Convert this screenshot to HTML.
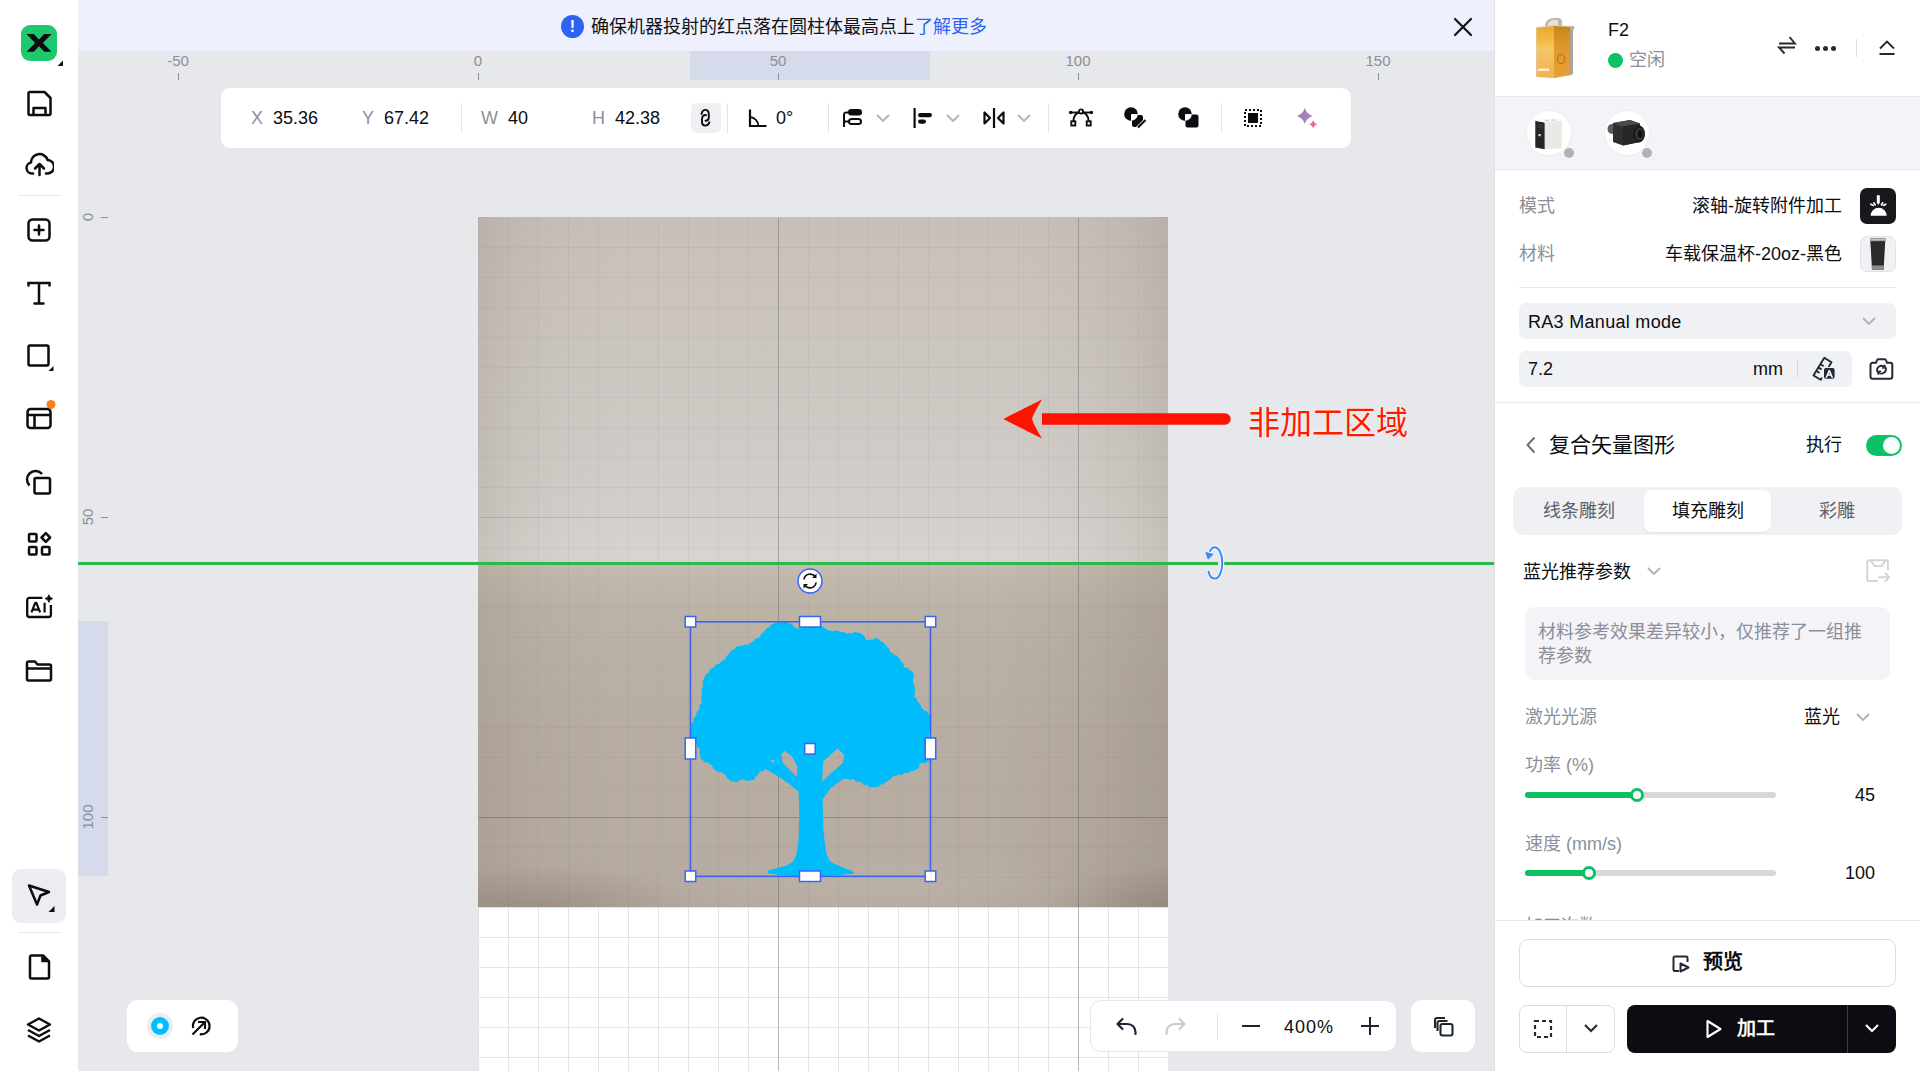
<!DOCTYPE html>
<html lang="zh-CN">
<head>
<meta charset="utf-8">
<style>
*{box-sizing:border-box;margin:0;padding:0}
html,body{width:1920px;height:1071px;overflow:hidden}
body{position:relative;background:#e7e8ec;font-family:"Liberation Sans",sans-serif;color:#111}
.a{position:absolute}
svg{display:block}
.t{white-space:nowrap;line-height:1}
</style>
</head>
<body>

<!-- CANVAS AREA -->

<div id="canvas" class="a" style="left:78px;top:0;width:1417px;height:1071px;background:#e7e8ec;overflow:hidden"></div>
<!-- workspace white grid -->
<div class="a" style="left:478px;top:217px;width:690px;height:854px;background-color:#fff;
background-image:linear-gradient(to right,#e3e3e6 1px,transparent 1px),linear-gradient(to bottom,#e3e3e6 1px,transparent 1px);
background-size:30px 30px;background-position:0 0"></div>
<!-- photo -->
<div class="a" style="left:478px;top:217px;width:690px;height:346px;
background:linear-gradient(to right,rgba(100,85,75,.14) 0%,rgba(100,85,75,.07) 5%,rgba(100,85,75,.025) 12%,rgba(100,85,75,0) 22%,rgba(100,85,75,0) 78%,rgba(100,85,75,.03) 88%,rgba(100,85,75,.08) 95%,rgba(100,85,75,.15) 100%),linear-gradient(to bottom,#c7bfba 0%,#ccc6c1 40%,#d2cdc8 80%,#d8d4cf 100%)"></div>
<div class="a" style="left:478px;top:563px;width:690px;height:344px;
background:radial-gradient(ellipse 160px 40px at 60px 344px,rgba(60,45,35,.16),rgba(60,45,35,0)),radial-gradient(ellipse 120px 40px at 690px 344px,rgba(60,45,35,.14),rgba(60,45,35,0)),radial-gradient(ellipse 260px 40px at 400px 325px,rgba(255,250,240,.10),rgba(255,250,240,0)),linear-gradient(to right,rgba(80,65,52,.10) 0%,rgba(80,65,52,.04) 8%,rgba(80,65,52,0) 20%,rgba(80,65,52,0) 75%,rgba(80,65,52,.05) 88%,rgba(80,65,52,.14) 100%),linear-gradient(to bottom,#c4bcb0 0%,#bcb3a7 12%,#b7ada2 50%,#b6aca1 85%,#b2a79c 100%)"></div>
<!-- grid over photo -->
<div class="a" style="left:479px;top:218px;width:689px;height:689px;
background-image:linear-gradient(to right,rgba(70,75,95,.06) 1px,transparent 1px),linear-gradient(to bottom,rgba(70,75,95,.06) 1px,transparent 1px);
background-size:30px 30px;background-position:29px 29px"></div>
<!-- major grid -->
<div class="a" style="left:778px;top:218px;width:1px;height:853px;background:rgba(70,70,70,.28)"></div>
<div class="a" style="left:1078px;top:218px;width:1px;height:853px;background:rgba(70,70,70,.28)"></div>
<div class="a" style="left:478px;top:517px;width:690px;height:1px;background:rgba(90,95,110,.16)"></div>
<div class="a" style="left:478px;top:817px;width:690px;height:1px;background:rgba(70,70,70,.28)"></div>


<!-- green line -->
<div class="a" style="left:78px;top:562px;width:1417px;height:3px;background:#2fb84a"></div>
<!-- tree + selection -->
<svg class="a" style="left:680px;top:611px" width="262" height="277" viewBox="-10 -10 262 277">
<g fill="#00bcfb" stroke="#00bcfb" stroke-width="2.5" stroke-linejoin="round" fill-rule="evenodd"><path d="M1.3,113.7 L3.9,102 L9.8,90 L13,82 L13,73 L15,57.5 L23.5,48 L35,40.5 L40.5,32.7 L49.7,26 L58.8,26 L62.7,22 L70.6,17 L75.8,10.5 L85,3.3 L96.7,2.6 L107,10.5 L118,6 L132,6.5 L136,11 L150,11.8 L157,14.4 L170,13 L178,23.5 L185.6,18.3 L194.8,24.8 L200,32.7 L209,39 L214,48 L222,52 L221,63 L224,68 L222,76 L228.8,83.7 L230,89 L239,95.4 L238,112 L236,125.5 L239,138.5 L227.5,140 L228,146 L215.7,150 L204,153 L196,159.4 L185.6,164.7 L173.9,160.8 L164.7,156.8 L154.2,155.5 L140,166 L131.4,177.7 L132,206.5 L133.5,222 L134.6,230 L136.5,236 L138.6,240.5 L142.5,243.5 L147.7,245.7 L156,249 L162.7,251.6 L150,252.8 L140,253.5 L100,253.5 L88,252.5 L78.4,251 L85,249 L96.7,245.7 L101,243.5 L104.6,240.5 L107,235.5 L108.3,230 L109.8,219.6 L110.5,193.4 L109.8,170 L100,162 L88.9,154.2 L73.9,145.7 L65.4,150.3 L58.2,158.8 L52.3,155.5 L41.8,159.4 L36,153 L35.3,150.3 L24.8,147.7 L23.5,142.5 L11.8,137.2 L11.1,127.4 L6.5,121.5ZM130.7,163.4 L132,139.8 L147.7,125.5 L155.6,133.3 L154,142.5ZM108.5,159.4 L108.5,145 L103,134.6 L94,128 L90,133.3 L91.5,142.5ZM77,139 L84.3,136.6 L86.3,145Z"/><g stroke="none"><circle cx="4.2" cy="110.4" r="4.2"/><circle cx="5.5" cy="104.6" r="4.2"/><circle cx="7.7" cy="98.8" r="4.2"/><circle cx="10.6" cy="92.9" r="4.2"/><circle cx="13.7" cy="86.1" r="4.2"/><circle cx="15.3" cy="77.8" r="4.2"/><circle cx="15.8" cy="69.6" r="4.2"/><circle cx="16.7" cy="62.0" r="4.2"/><circle cx="19.3" cy="55.9" r="4.2"/><circle cx="23.5" cy="51.2" r="4.2"/><circle cx="28.5" cy="47.1" r="4.2"/><circle cx="34.2" cy="43.5" r="4.2"/><circle cx="39.7" cy="37.9" r="4.2"/><circle cx="44.6" cy="32.4" r="4.2"/><circle cx="49.2" cy="29.2" r="4.2"/><circle cx="55.9" cy="27.6" r="4.2"/><circle cx="62.3" cy="25.7" r="4.2"/><circle cx="68.0" cy="21.3" r="4.2"/><circle cx="74.4" cy="15.7" r="4.2"/><circle cx="79.2" cy="10.8" r="4.2"/><circle cx="83.6" cy="7.2" r="4.2"/><circle cx="88.7" cy="5.3" r="4.2"/><circle cx="94.4" cy="5.0" r="4.2"/><circle cx="99.8" cy="6.8" r="4.2"/><circle cx="104.9" cy="10.8" r="4.2"/><circle cx="110.0" cy="11.7" r="4.2"/><circle cx="115.4" cy="9.4" r="4.2"/><circle cx="121.5" cy="8.4" r="4.2"/><circle cx="128.3" cy="8.7" r="4.2"/><circle cx="133.6" cy="11.0" r="4.2"/><circle cx="138.9" cy="13.4" r="4.2"/><circle cx="145.8" cy="13.8" r="4.2"/><circle cx="152.6" cy="15.2" r="4.2"/><circle cx="159.2" cy="16.1" r="4.2"/><circle cx="165.5" cy="15.3" r="4.2"/><circle cx="170.7" cy="17.5" r="4.2"/><circle cx="174.5" cy="22.7" r="4.2"/><circle cx="180.3" cy="22.6" r="4.2"/><circle cx="186.3" cy="21.6" r="4.2"/><circle cx="190.8" cy="24.7" r="4.2"/><circle cx="195.6" cy="30.2" r="4.2"/><circle cx="200.3" cy="35.6" r="4.2"/><circle cx="204.8" cy="38.6" r="4.2"/><circle cx="209.4" cy="44.5" r="4.2"/><circle cx="215.9" cy="50.9" r="4.2"/><circle cx="219.6" cy="55.5" r="4.2"/><circle cx="219.0" cy="60.9" r="4.2"/><circle cx="220.3" cy="66.0" r="4.2"/><circle cx="220.7" cy="72.4" r="4.2"/><circle cx="223.1" cy="80.1" r="4.2"/><circle cx="227.1" cy="86.4" r="4.2"/><circle cx="229.9" cy="90.6" r="4.2"/><circle cx="234.4" cy="93.7" r="4.2"/><circle cx="236.4" cy="99.4" r="4.2"/><circle cx="236.0" cy="107.5" r="4.2"/><circle cx="235.2" cy="114.9" r="4.2"/><circle cx="234.3" cy="121.5" r="4.2"/><circle cx="234.6" cy="128.0" r="4.2"/><circle cx="236.1" cy="134.4" r="4.2"/><circle cx="234.0" cy="138.0" r="4.2"/><circle cx="228.3" cy="138.7" r="4.2"/><circle cx="225.7" cy="142.0" r="4.2"/><circle cx="222.9" cy="145.9" r="4.2"/><circle cx="216.8" cy="147.8" r="4.2"/><circle cx="210.8" cy="149.5" r="4.2"/><circle cx="205.0" cy="150.9" r="4.2"/><circle cx="198.2" cy="154.7" r="4.2"/><circle cx="191.7" cy="159.1" r="4.2"/><circle cx="186.6" cy="161.7" r="4.2"/><circle cx="181.2" cy="162.0" r="4.2"/><circle cx="175.4" cy="160.0" r="4.2"/><circle cx="168.0" cy="156.9" r="4.2"/><circle cx="160.8" cy="154.5" r="4.2"/><circle cx="155.7" cy="153.8" r="4.2"/><circle cx="71.2" cy="146.3" r="4.2"/><circle cx="65.1" cy="150.7" r="4.2"/><circle cx="61.5" cy="155.0" r="4.2"/><circle cx="56.9" cy="155.5" r="4.2"/><circle cx="51.4" cy="154.9" r="4.2"/><circle cx="46.1" cy="156.9" r="4.2"/><circle cx="40.7" cy="154.7" r="4.2"/><circle cx="37.5" cy="150.3" r="4.2"/><circle cx="34.6" cy="148.3" r="4.2"/><circle cx="29.4" cy="147.1" r="4.2"/><circle cx="26.2" cy="143.9" r="4.2"/><circle cx="22.6" cy="140.1" r="4.2"/><circle cx="16.8" cy="137.6" r="4.2"/><circle cx="13.6" cy="131.5" r="4.2"/><circle cx="11.0" cy="123.8" r="4.2"/><circle cx="6.1" cy="117.1" r="4.2"/></g></g>
<rect x="0.5" y="0.8" width="240" height="254.5" fill="none" stroke="#3a64f2" stroke-width="1.6"/>
<g fill="#fff" stroke="#3a64f2" stroke-width="1.5">
<rect x="-4.8" y="-4.5" width="10.5" height="10.5"/>
<rect x="235.2" y="-4.5" width="10.5" height="10.5"/>
<rect x="-4.8" y="250" width="10.5" height="10.5"/>
<rect x="235.2" y="250" width="10.5" height="10.5"/>
<rect x="109.5" y="-4.5" width="21" height="10.5"/>
<rect x="109.5" y="250" width="21" height="10.5"/>
<rect x="-4.8" y="117" width="10.5" height="21"/>
<rect x="235.2" y="117" width="10.5" height="21"/>
<rect x="114.7" y="122.5" width="10.5" height="10.5"/>
</g></svg>
<!-- rotate handle -->
<svg class="a" style="left:796px;top:567px" width="28" height="28" viewBox="0 0 28 28"><circle cx="14" cy="14" r="12" fill="#fff" stroke="#3a64f2" stroke-width="1.5"/><g fill="none" stroke="#111" stroke-width="1.7"><path d="M8 12.5a6.2 6.2 0 0 1 11.2-2.8M20 15.5a6.2 6.2 0 0 1-11.2 2.8"/></g><path d="M20.5 6.5v4.5h-4.5z M7.5 21.5V17H12z" fill="#111"/></svg>
<!-- blue rotate icon on green line -->
<div class="a" style="left:1218px;top:560px;width:6px;height:6px;background:#e7e8ec"></div>
<svg class="a" style="left:1202px;top:545px" width="26" height="36" viewBox="0 0 26 36" fill="none"><g stroke="#fff" stroke-width="4" stroke-linecap="round" opacity=".8"><path d="M6.5 26.5C7.5 31 9.8 33.6 12.6 33.6C16.8 33.6 20.3 27 20.3 18C20.3 9 16.8 2.2 12.6 2.2C10.8 2.2 9.3 3.5 8 6"/></g><path d="M6.5 26.5C7.5 31 9.8 33.6 12.6 33.6C16.8 33.6 20.3 27 20.3 18C20.3 9 16.8 2.2 12.6 2.2C10.8 2.2 9.3 3.5 8 6" stroke="#3a8cf5" stroke-width="2" stroke-linecap="round"/><path d="M3.8 7.5L11 9.3L6.2 14z" fill="#3a8cf5" stroke="#3a8cf5" stroke-width="1" stroke-linejoin="round"/></svg>
<!-- red arrow -->
<svg class="a" style="left:1000px;top:396px" width="236" height="46" viewBox="0 0 236 46"><path d="M42 17.3H225a5.7 5.7 0 0 1 0 11.4H42z" fill="#ff1200"/><path d="M3.3 23L42 3.5C37 12 34 17 32 23c2 6 5 11 10 19.5z" fill="#ff1200"/></svg>
<div class="a t" style="left:1248px;top:407px;font-size:32px;font-weight:400;color:#ff1a00;text-shadow:0 0 2px #fff,0 0 1px #fff">非加工区域</div>


<!-- notification bar -->
<div class="a" style="left:78px;top:0;width:1417px;height:51px;background:#eef1fd;border-bottom-left-radius:4px"></div>
<div class="a" style="left:561px;top:15px;width:23px;height:23px;border-radius:50%;background:#2d63f0"></div>
<div class="a t" style="left:561px;top:15px;width:23px;height:23px;color:#fff;font-weight:bold;font-size:16px;text-align:center;line-height:23px">!</div>
<div class="a t" style="left:591px;top:18px;font-size:18px;color:#111;font-weight:500">确保机器投射的红点落在圆柱体最高点上<span style="color:#2d63f0">了解更多</span></div>
<svg class="a" style="left:1453px;top:17px" width="20" height="20" viewBox="0 0 20 20"><path d="M2 2L18 18M18 2L2 18" stroke="#111" stroke-width="2.2" stroke-linecap="round"/></svg>

<!-- top ruler -->
<div class="a" style="left:690px;top:51px;width:240px;height:29px;background:#d5dbeb"></div>
<div class="a t" style="left:158px;top:53px;width:40px;text-align:center;font-size:15px;color:#8a8f99">-50</div>
<div class="a t" style="left:458px;top:53px;width:40px;text-align:center;font-size:15px;color:#8a8f99">0</div>
<div class="a t" style="left:758px;top:53px;width:40px;text-align:center;font-size:15px;color:#8a8f99">50</div>
<div class="a t" style="left:1058px;top:53px;width:40px;text-align:center;font-size:15px;color:#8a8f99">100</div>
<div class="a t" style="left:1358px;top:53px;width:40px;text-align:center;font-size:15px;color:#8a8f99">150</div>
<div class="a" style="left:178px;top:73px;width:1px;height:7px;background:#8a8f99"></div>
<div class="a" style="left:478px;top:73px;width:1px;height:7px;background:#8a8f99"></div>
<div class="a" style="left:778px;top:73px;width:1px;height:7px;background:#8a8f99"></div>
<div class="a" style="left:1078px;top:73px;width:1px;height:7px;background:#8a8f99"></div>
<div class="a" style="left:1378px;top:73px;width:1px;height:7px;background:#8a8f99"></div>

<!-- left ruler -->
<div class="a" style="left:78px;top:621px;width:30px;height:255px;background:#d5dbeb"></div>
<div class="a t" style="left:67px;top:210px;width:40px;height:14px;text-align:center;font-size:15px;color:#8a8f99;transform:rotate(-90deg);transform-origin:20px 7px">0</div>
<div class="a t" style="left:67px;top:510px;width:40px;height:14px;text-align:center;font-size:15px;color:#8a8f99;transform:rotate(-90deg);transform-origin:20px 7px">50</div>
<div class="a t" style="left:67px;top:810px;width:40px;height:14px;text-align:center;font-size:15px;color:#8a8f99;transform:rotate(-90deg);transform-origin:20px 7px">100</div>
<div class="a" style="left:101px;top:217px;width:7px;height:1px;background:#8a8f99"></div>
<div class="a" style="left:101px;top:517px;width:7px;height:1px;background:#8a8f99"></div>
<div class="a" style="left:101px;top:817px;width:7px;height:1px;background:#8a8f99"></div>


<!-- LEFT SIDEBAR -->
<div id="sidebar" class="a" style="left:0;top:0;width:78px;height:1071px;background:#fff">
<div class="a" style="left:21px;top:25px;width:36px;height:36px;border-radius:9px;background:#1ec86e"></div>
<svg class="a" style="left:21px;top:25px" width="36" height="36" viewBox="0 0 36 36"><path d="M5.5 9h7.2l5.3 5.6 5.3-5.6h7.2l-8.6 8.9 8.6 8.9h-7.2L18 21.2l-5.3 5.6H5.5l8.6-8.9z" fill="#0b0d10"/></svg>
<svg class="a" style="left:57px;top:60px" width="7" height="7" viewBox="0 0 7 7"><path d="M6 0.5V6H0.5z" fill="#111"/></svg>
<!-- save -->
<svg class="a" style="left:25px;top:89px" width="29" height="29" viewBox="0 0 29 29" fill="none" stroke="#0b0d10" stroke-width="2.5" stroke-linejoin="round"><path d="M3.5 4.5a1.5 1.5 0 0 1 1.5-1.5h14.5l6 6v15.5a1.5 1.5 0 0 1-1.5 1.5H5a1.5 1.5 0 0 1-1.5-1.5z"/><path d="M8.5 26v-7h12v7"/></svg>
<!-- upload -->
<svg class="a" style="left:25px;top:150px" width="29" height="27" viewBox="0 0 29 27" fill="none" stroke="#0b0d10" stroke-width="2.5" stroke-linecap="round" stroke-linejoin="round"><path d="M8 23.5H7a5.5 5.5 0 0 1-1-10.9A8.5 8.5 0 0 1 22.6 10 6.5 6.5 0 0 1 22 23.5h-1"/><path d="M14.5 25V14.5M10 18.5l4.5-4.5 4.5 4.5"/></svg>
<div class="a" style="left:18px;top:195px;width:42px;height:1px;background:#e6e7ec"></div>
<!-- add -->
<svg class="a" style="left:26px;top:217px" width="26" height="26" viewBox="0 0 26 26" fill="none" stroke="#0b0d10" stroke-width="2.5" stroke-linecap="round"><rect x="2.5" y="2.5" width="21" height="21" rx="4"/><path d="M13 8.5v9M8.5 13h9"/></svg>
<!-- T -->
<svg class="a" style="left:26px;top:280px" width="26" height="26" viewBox="0 0 26 26" fill="none" stroke="#0b0d10" stroke-width="2.5" stroke-linecap="round"><path d="M2.5 5.5V3h21v2.5M13 3v20.5M8.5 23.5h9"/></svg>
<!-- rect -->
<svg class="a" style="left:26px;top:343px" width="30" height="30" viewBox="0 0 30 30" fill="none" stroke="#0b0d10" stroke-width="2.5"><rect x="2.5" y="2.5" width="20" height="20" rx="1.5"/><path d="M27.5 23v5h-5z" fill="#0b0d10" stroke="none"/></svg>
<!-- template -->
<svg class="a" style="left:25px;top:400px" width="32" height="31" viewBox="0 0 32 31" fill="none" stroke="#0b0d10" stroke-width="2.5"><rect x="2.5" y="9" width="23" height="19" rx="3"/><path d="M2.5 15h23M9.5 15v13"/><circle cx="26" cy="4.5" r="4.5" fill="#fa7d1e" stroke="none"/></svg>
<!-- shapes -->
<svg class="a" style="left:24px;top:467px" width="30" height="29" viewBox="0 0 30 29" fill="none" stroke="#0b0d10" stroke-width="2.5" stroke-linejoin="round"><path d="M5.5 18.5A8.5 8.5 0 1 1 18 7"/><rect x="10.5" y="11" width="15.5" height="15.5" rx="1.5"/></svg>
<!-- apps -->
<svg class="a" style="left:26px;top:531px" width="27" height="27" viewBox="0 0 27 27" fill="none" stroke="#0b0d10" stroke-width="2.5" stroke-linejoin="round"><rect x="3" y="3" width="7.5" height="7.5" rx="1"/><rect x="3" y="16" width="7.5" height="7.5" rx="1"/><rect x="16" y="16" width="7.5" height="7.5" rx="1"/><path d="M19.8 2.2l4.3 4.3-4.3 4.3-4.3-4.3z"/></svg>
<!-- AI -->
<svg class="a" style="left:25px;top:594px" width="30" height="26" viewBox="0 0 30 26" fill="none" stroke="#0b0d10" stroke-width="2.3" stroke-linejoin="round"><path d="M17.4 3.8H4.4a2.2 2.2 0 0 0-2.2 2.2v14.8a2.2 2.2 0 0 0 2.2 2.2h19.3a2.2 2.2 0 0 0 2.2-2.2V11"/><path d="M6.5 18.4l3.7-9.6h1.2l3.7 9.6M8 15.6h5.6M19.6 8.8v9.6" stroke-width="2.2"/><path d="M23.9 0.8Q24.4 4.1 27.7 4.6Q24.4 5.1 23.9 8.4Q23.4 5.1 20.1 4.6Q23.4 4.1 23.9 0.8z" fill="#0b0d10" stroke-width="1"/></svg>
<!-- folder -->
<svg class="a" style="left:24px;top:658px" width="30" height="25" viewBox="0 0 30 25" fill="none" stroke="#0b0d10" stroke-width="2.5" stroke-linejoin="round"><path d="M3 5a1.5 1.5 0 0 1 1.5-1.5h6.5l2.5 3h12a1.5 1.5 0 0 1 1.5 1.5v13a1.5 1.5 0 0 1-1.5 1.5h-21A1.5 1.5 0 0 1 3 21z"/><path d="M3 10.5h24"/></svg>
<!-- pointer selected -->
<div class="a" style="left:12px;top:869px;width:54px;height:54px;border-radius:9px;background:#ececf1"></div>
<svg class="a" style="left:26px;top:882px" width="30" height="31" viewBox="0 0 30 31" fill="none" stroke="#0b0d10" stroke-width="2.5" stroke-linejoin="round"><path d="M3 3.5l20 6.5-8.5 3.5-3.5 9z"/><path d="M28.5 24v6h-6z" fill="#0b0d10" stroke="none"/></svg>
<div class="a" style="left:18px;top:932px;width:42px;height:1px;background:#e6e7ec"></div>
<!-- file -->
<svg class="a" style="left:26px;top:953px" width="26" height="28" viewBox="0 0 26 28" fill="none" stroke="#0b0d10" stroke-width="2.5" stroke-linejoin="round"><path d="M4 4a1.5 1.5 0 0 1 1.5-1.5h11.5l6 6V24a1.5 1.5 0 0 1-1.5 1.5h-16A1.5 1.5 0 0 1 4 24z"/><path d="M16 3v5.5h6" fill="#0b0d10" stroke-width="1.5"/></svg>
<!-- layers -->
<svg class="a" style="left:25px;top:1016px" width="28" height="28" viewBox="0 0 28 28" fill="none" stroke="#0b0d10" stroke-width="2.5" stroke-linejoin="round"><path d="M14 2.5l11 6-11 6-11-6z"/><path d="M3 14l11 6 11-6M3 19.5l11 6 11-6"/></svg>
</div>


<!-- toolbar -->
<div class="a" style="left:221px;top:88px;width:1130px;height:60px;border-radius:9px;background:#fff"></div>
<div class="a t" style="left:251px;top:109px;font-size:18px;color:#8a8f99">X</div>
<div class="a t" style="left:273px;top:109px;font-size:18px;color:#0b0d10">35.36</div>
<div class="a t" style="left:362px;top:109px;font-size:18px;color:#8a8f99">Y</div>
<div class="a t" style="left:384px;top:109px;font-size:18px;color:#0b0d10">67.42</div>
<div class="a" style="left:461px;top:103px;width:1px;height:30px;background:#e3e4ea"></div>
<div class="a t" style="left:481px;top:109px;font-size:18px;color:#8a8f99">W</div>
<div class="a t" style="left:508px;top:109px;font-size:18px;color:#0b0d10">40</div>
<div class="a t" style="left:592px;top:109px;font-size:18px;color:#8a8f99">H</div>
<div class="a t" style="left:615px;top:109px;font-size:18px;color:#0b0d10">42.38</div>
<div class="a" style="left:691px;top:103px;width:30px;height:30px;border-radius:5px;background:#eff0f4"></div>
<svg class="a" style="left:690px;top:102px" width="32" height="32" viewBox="0 0 32 32" fill="none" stroke="#0b0d10" stroke-width="1.9" stroke-linecap="round"><path d="M11.5 12C12 9.5 13.5 7.9 15.4 7.9C17.5 7.9 18.8 10 18.8 12.5V15.5C18.8 17.5 17.3 18.8 15.5 18.8"/><path d="M16.1 13.1C13.5 12.8 12 14.5 12 16.8V20.3C12 22.3 13.5 23.6 15.4 23.6C17.3 23.6 18.5 22.3 19.4 20.3"/></svg>
<div class="a" style="left:727px;top:103px;width:1px;height:30px;background:#e3e4ea"></div>
<svg class="a" style="left:748px;top:108px" width="20" height="20" viewBox="0 0 20 20" fill="none" stroke="#0b0d10" stroke-width="2.2"><path d="M2 1.5V18h16.5"/><path d="M2 9a9.5 9.5 0 0 1 8.5 9" stroke-width="1.8"/></svg>
<div class="a t" style="left:776px;top:109px;font-size:18px;color:#0b0d10">0°</div>
<div class="a" style="left:828px;top:103px;width:1px;height:30px;background:#e3e4ea"></div>
<!-- align 1 -->
<svg class="a" style="left:843px;top:108px" width="20" height="20" viewBox="0 0 20 20" fill="#0b0d10"><path d="M1 19V6.5a2 2 0 0 1 2-2h2" stroke="#0b0d10" stroke-width="2" fill="none"/><rect x="5" y="1" width="14" height="6.5" rx="3.2"/><rect x="6" y="11" width="12" height="5" rx="2.5" fill="none" stroke="#0b0d10" stroke-width="2"/><path d="M1 13.5h5" stroke="#0b0d10" stroke-width="2"/></svg>
<svg class="a" style="left:875px;top:113px" width="16" height="10" viewBox="0 0 16 10" fill="none" stroke="#aeb1b8" stroke-width="1.8"><path d="M2 2l6 6 6-6"/></svg>
<!-- align 2 -->
<svg class="a" style="left:913px;top:107px" width="20" height="22" viewBox="0 0 20 22" fill="#0b0d10"><rect x="0.5" y="1" width="2.2" height="20"/><rect x="5" y="6" width="14" height="4.2" rx="2.1"/><rect x="5" y="12.5" width="8" height="4.2" rx="2.1"/></svg>
<svg class="a" style="left:945px;top:113px" width="16" height="10" viewBox="0 0 16 10" fill="none" stroke="#aeb1b8" stroke-width="1.8"><path d="M2 2l6 6 6-6"/></svg>
<!-- flip -->
<svg class="a" style="left:983px;top:107px" width="22" height="22" viewBox="0 0 22 22" fill="none" stroke="#0b0d10" stroke-width="2.2" stroke-linejoin="round"><path d="M11 1v20"/><path d="M1.5 5.5v11l5.5-5.5z"/><path d="M20.5 5.5v11l-5.5-5.5z"/></svg>
<svg class="a" style="left:1016px;top:113px" width="16" height="10" viewBox="0 0 16 10" fill="none" stroke="#aeb1b8" stroke-width="1.8"><path d="M2 2l6 6 6-6"/></svg>
<div class="a" style="left:1048px;top:103px;width:1px;height:30px;background:#e3e4ea"></div>
<!-- bezier -->
<svg class="a" style="left:1068px;top:108px" width="26" height="20" viewBox="0 0 26 20" fill="none" stroke="#0b0d10" stroke-width="1.9"><path d="M3 4.5h20"/><path d="M5.3 13.2C5.8 8 8.5 4.3 13 4.3S20.2 8 20.7 13.2"/><circle cx="13" cy="3.5" r="2.1" fill="#fff"/><circle cx="2.6" cy="4.5" r="1.7" fill="#0b0d10" stroke="none"/><circle cx="23.4" cy="4.5" r="1.7" fill="#0b0d10" stroke="none"/><rect x="3.3" y="13.3" width="4" height="4.2"/><rect x="18.7" y="13.3" width="4" height="4.2"/></svg>
<!-- boolean 1 -->
<svg class="a" style="left:1124px;top:107px" width="23" height="22" viewBox="0 0 23 22" fill="#0b0d10"><circle cx="7" cy="7" r="6.8"/><path d="M8 8h9a2 2 0 0 1 2 2v3L12 20h-2a2 2 0 0 1-2-2z"/><circle cx="7" cy="7" r="0" /><path d="M7 13.8A6.8 6.8 0 0 0 13.8 7H8a1 1 0 0 0-1 1z" fill="#fff"/><path d="M14 20.5l7.5-7.5" stroke="#0b0d10" stroke-width="2.2"/></svg>
<!-- boolean 2 -->
<svg class="a" style="left:1178px;top:107px" width="21" height="21" viewBox="0 0 21 21" fill="#0b0d10"><circle cx="7" cy="7" r="6.8"/><rect x="7.5" y="7.5" width="13" height="13" rx="2"/><path d="M7 13.8A6.8 6.8 0 0 0 13.8 7H8a1 1 0 0 0-1 1z" fill="#fff"/></svg>
<div class="a" style="left:1221px;top:103px;width:1px;height:30px;background:#e3e4ea"></div>
<!-- select -->
<svg class="a" style="left:1243px;top:108px" width="20" height="20" viewBox="0 0 20 20"><rect x="2" y="2" width="16" height="16" fill="none" stroke="#0b0d10" stroke-width="2" stroke-dasharray="2 2"/><rect x="5" y="5" width="10" height="10" fill="#0b0d10"/></svg>
<!-- sparkle -->
<svg class="a" style="left:1296px;top:107px" width="22" height="22" viewBox="0 0 22 22"><defs><linearGradient id="sp" x1="0" y1="0" x2="1" y2="1"><stop offset="0" stop-color="#8a879e"/><stop offset="1" stop-color="#c27ad8"/></linearGradient></defs><path d="M8.8,1Q10.56,7.24 16.8,9Q10.56,10.76 8.8,17Q7.04,10.76 0.8000000000000007,9Q7.04,7.24 8.8,1Z" fill="url(#sp)"/><path d="M17.2,13.2Q18.08,16.32 21.2,17.2Q18.08,18.08 17.2,21.2Q16.32,18.08 13.2,17.2Q16.32,16.32 17.2,13.2Z" fill="#f0688e"/></svg>


<!-- bottom-left pill -->
<div class="a" style="left:127px;top:1000px;width:111px;height:52px;border-radius:11px;background:#fff"></div>
<div class="a" style="left:147px;top:1013px;width:26px;height:26px;border-radius:50%;background:#ececf1"></div>
<div class="a" style="left:151px;top:1017px;width:18px;height:18px;border-radius:50%;background:#00bfff"></div>
<div class="a" style="left:157px;top:1023px;width:6px;height:6px;border-radius:50%;background:#fff"></div>
<svg class="a" style="left:190px;top:1015px" width="22" height="22" viewBox="0 0 22 22" fill="none" stroke="#0b0d10" stroke-width="2.2"><path d="M3.2 13A8.3 8.3 0 1 1 9.8 19.2"/><path d="M2.5 19.5l12-12M8 7h7v7" stroke-linejoin="miter"/></svg>

<!-- zoom controls -->
<div class="a" style="left:1090px;top:1000px;width:307px;height:52px;border-radius:11px;background:#fff;border:1px solid #e6e7ec"></div>
<svg class="a" style="left:1115px;top:1016px" width="24" height="20" viewBox="0 0 24 20" fill="none" stroke="#1f2530" stroke-width="2.2" stroke-linecap="round" stroke-linejoin="round"><path d="M7.5 3L2.5 8l5 5"/><path d="M3 8h9.5a8 8 0 0 1 8 8v2"/></svg>
<svg class="a" style="left:1163px;top:1016px" width="24" height="20" viewBox="0 0 24 20" fill="none" stroke="#c9ccd2" stroke-width="2.2" stroke-linecap="round" stroke-linejoin="round"><path d="M16.5 3l5 5-5 5"/><path d="M21 8h-9.5a8 8 0 0 0-8 8v2"/></svg>
<div class="a" style="left:1217px;top:1013px;width:1px;height:27px;background:#e3e4ea"></div>
<div class="a" style="left:1242px;top:1025px;width:18px;height:2px;background:#1f2530"></div>
<div class="a t" style="left:1284px;top:1018px;font-size:18px;color:#0b0d10;letter-spacing:1px">400%</div>
<div class="a" style="left:1361px;top:1025px;width:18px;height:2px;background:#1f2530"></div>
<div class="a" style="left:1369px;top:1017px;width:2px;height:18px;background:#1f2530"></div>
<div class="a" style="left:1411px;top:1000px;width:64px;height:52px;border-radius:11px;background:#fff"></div>
<svg class="a" style="left:1432px;top:1015px" width="23" height="23" viewBox="0 0 23 23" fill="none" stroke="#1f2530" stroke-width="2.1" stroke-linejoin="round"><path d="M3 13V5a2 2 0 0 1 2-2h8"/><path d="M5.5 16V8a2 2 0 0 1 2-2h8"/><rect x="8.5" y="9" width="12" height="11.5" rx="2"/></svg>

<!-- RIGHT PANEL -->
<div id="panel" class="a" style="left:1495px;top:0;width:425px;height:1071px;background:#fff"></div>
<!-- header -->
<svg class="a" style="left:1530px;top:14px" width="48" height="66" viewBox="0 0 48 66"><defs><linearGradient id="dvl" x1="0" y1="0" x2="0" y2="1"><stop offset="0" stop-color="#e9a92c"/><stop offset=".35" stop-color="#f3c04d"/><stop offset=".42" stop-color="#f6c76a"/><stop offset="1" stop-color="#f2b24a"/></linearGradient><linearGradient id="dvr" x1="0" y1="0" x2="0" y2="1"><stop offset="0" stop-color="#c98416"/><stop offset=".4" stop-color="#dd9a2c"/><stop offset="1" stop-color="#e8a038"/></linearGradient></defs>
<path d="M15 12c0-5 4-8 10-8h3c3 0 4 2 4 4v6h-17z" fill="#bfb8ae"/><path d="M18 11c0-3 3-5 7-5h3v6h-10z" fill="#e6e2dc"/>
<path d="M6 13l18-2 18 1v49l-18 3L6 63z" fill="#d8d2c8"/>
<path d="M6.5 14l17.5-2v52L6.5 62.5z" fill="url(#dvl)"/>
<path d="M24 12l17 1v48l-17 3z" fill="url(#dvr)"/>
<path d="M40 13l3-1v48l-3 1z" fill="#a8a39b"/><circle cx="42.5" cy="14" r="2" fill="#b8b2a8"/>
<path d="M8 54.5h11v2.5H8z" fill="#fff5e0" opacity=".85"/><ellipse cx="31" cy="45" rx="3.5" ry="4.5" fill="none" stroke="#b06e12" stroke-width="1"/></svg>
<div class="a t" style="left:1608px;top:21px;font-size:18px;color:#0b0d10">F2</div>
<div class="a" style="left:1608px;top:53px;width:15px;height:15px;border-radius:50%;background:#0cc265"></div>
<div class="a t" style="left:1629px;top:51px;font-size:18px;color:#8a8f99">空闲</div>
<svg class="a" style="left:1777px;top:35px" width="20" height="20" viewBox="0 0 20 20" fill="none" stroke="#232a35" stroke-width="1.9"><path d="M2 8.5h16L12.5 2M18 12.5H2L7.5 18.5"/></svg>
<div class="a" style="left:1815px;top:46px;width:5px;height:5px;border-radius:50%;background:#232a35"></div>
<div class="a" style="left:1823px;top:46px;width:5px;height:5px;border-radius:50%;background:#232a35"></div>
<div class="a" style="left:1831px;top:46px;width:5px;height:5px;border-radius:50%;background:#232a35"></div>
<div class="a" style="left:1856px;top:39px;width:1px;height:18px;background:#dcdde3"></div>
<svg class="a" style="left:1877px;top:39px" width="20" height="18" viewBox="0 0 20 18" fill="none" stroke="#232a35" stroke-width="1.9"><path d="M3 9.5l7-7 7 7M2.5 15h15"/></svg>
<!-- accessories -->
<div class="a" style="left:1495px;top:96px;width:425px;height:74px;background:#f4f4f8;border-top:1px solid #e9eaef;border-bottom:1px solid #e6e7ec"></div>
<div class="a" style="left:1526px;top:110px;width:46px;height:46px;border-radius:50%;background:#fff;border:1px solid #ededed"></div>
<svg class="a" style="left:1532px;top:116px" width="34" height="36" viewBox="0 0 34 36"><path d="M3 4.5l9.5-1.5 17 .5V32l-17 1.5L3 32z" fill="#f3f2ef"/><path d="M3.3 4.8l9.5 1.6V33.2L3.3 31.6z" fill="#262626"/><path d="M12.8 6.4l16.7-1.2V32l-16.7 1.2z" fill="#e9e8e4"/><path d="M3.3 4.8l9.2-1.5 17 .6-16.7 2.5z" fill="#fbfbfa"/><ellipse cx="15" cy="4.5" rx="2.2" ry="1" fill="#d6d5d2"/><ellipse cx="21.5" cy="4.3" rx="2.2" ry="1" fill="#d6d5d2"/><rect x="6.5" y="18" width="2.2" height="2.2" fill="#ddd"/><path d="M5 9h6M5 11h6" stroke="#3e5a44" stroke-width=".6"/></svg>
<div class="a" style="left:1564px;top:148px;width:10px;height:10px;border-radius:50%;background:#b0b2b8"></div>
<div class="a" style="left:1604px;top:110px;width:46px;height:46px;border-radius:50%;background:#fff;border:1px solid #ededed"></div>
<svg class="a" style="left:1606px;top:116px" width="42" height="34" viewBox="0 0 42 34"><ellipse cx="6" cy="13" rx="4.5" ry="5" fill="#5a5a5a"/><path d="M7 7l17-3 10 3.5V26l-17 3.5L7 26z" fill="#2f2f2f"/><path d="M7 7l17-3 10 3.5-17 3z" fill="#4a4a4a"/><path d="M17 10.5l17-3V26l-17 3.5z" fill="#262626"/><ellipse cx="33" cy="18" rx="6" ry="8.5" fill="#1c1c1c"/><ellipse cx="33.5" cy="18" rx="4" ry="6" fill="#3a3a3a"/><ellipse cx="34" cy="18" rx="2.5" ry="4" fill="#111"/></svg>
<div class="a" style="left:1642px;top:148px;width:10px;height:10px;border-radius:50%;background:#b0b2b8"></div>
<!-- mode/material -->
<div class="a t" style="left:1519px;top:197px;font-size:18px;color:#8a8f99">模式</div>
<div class="a t" style="left:1600px;width:242px;top:197px;font-size:18px;color:#0b0d10;text-align:right">滚轴-旋转附件加工</div>
<div class="a" style="left:1860px;top:188px;width:36px;height:36px;border-radius:7px;background:#17181c"></div>
<svg class="a" style="left:1860px;top:188px" width="36" height="36" viewBox="0 0 36 36"><path d="M16.8 7.2h3v7.3L18.3 17l-1.5-2.5z" fill="#fff"/><g stroke="#fff" stroke-width="1.6" stroke-linecap="round"><path d="M10.8 16.2l2.6 1.3M13.8 14.8l1.4 2M25.8 16.2l-2.6 1.3M22.8 14.8l-1.4 2"/></g><path d="M10.6 27.8a8.05 8 0 0 1 16.1 0z" fill="#fff"/></svg>
<div class="a t" style="left:1519px;top:245px;font-size:18px;color:#8a8f99">材料</div>
<div class="a t" style="left:1560px;width:282px;top:245px;font-size:18px;color:#0b0d10;text-align:right">车载保温杯-20oz-黑色</div>
<div class="a" style="left:1860px;top:236px;width:36px;height:36px;border-radius:7px;background:#f0f1f5;border:1px solid #e2e3e8"></div>
<svg class="a" style="left:1860px;top:236px" width="36" height="36" viewBox="0 0 36 36"><path d="M10.2 2.5h15.2l-1.8 31.3H12z" fill="#2a2a2a"/><path d="M10 2.2h15.6v3H10z" fill="#9a9a9a"/><path d="M10.4 3.2h14.8v1H10.4z" fill="#d0d0d0"/><path d="M11.8 29.5h11.9l-.1 4.3H12z" fill="#8e8e8e"/></svg>
<div class="a" style="left:1519px;top:287px;width:377px;height:1px;background:#e6e7ec"></div>
<!-- select -->
<div class="a" style="left:1519px;top:303px;width:377px;height:36px;border-radius:7px;background:#f0f1f5"></div>
<div class="a t" style="left:1528px;top:313px;font-size:18px;color:#0b0d10;letter-spacing:.3px">RA3 Manual mode</div>
<svg class="a" style="left:1861px;top:315px" width="16" height="12" viewBox="0 0 16 12" fill="none" stroke="#aeb1b8" stroke-width="1.8"><path d="M2 3l6 6 6-6"/></svg>
<div class="a" style="left:1519px;top:351px;width:333px;height:36px;border-radius:7px;background:#f0f1f5"></div>
<div class="a t" style="left:1528px;top:360px;font-size:18px;color:#0b0d10">7.2</div>
<div class="a t" style="left:1753px;top:360px;font-size:18px;color:#0b0d10">mm</div>
<div class="a" style="left:1797px;top:360px;width:1px;height:18px;background:#d9dae0"></div>

<svg class="a" style="left:1808px;top:352px" width="92" height="34" viewBox="0 0 92 34" fill="none" stroke="#232a35" stroke-width="1.9" stroke-linecap="round" stroke-linejoin="round"><path d="M21 14.2L23.5 10.3L16.3 5.7L5.5 23.5L12.7 27.8L13.6 26.3"/><path d="M12.6 12.2l2.4 1.5M10.6 15.6l2.4 1.5M8.5 19l2.4 1.5"/><rect x="16" y="16" width="10.6" height="10.8" rx="2" fill="#232a35" stroke="none"/><path d="M18.4 25.2L21.3 18.6L24.2 25.2M19.5 22.9h3.6" stroke="#fff" stroke-width="1.5"/><path d="M62.5 13a2.2 2.2 0 0 1 2.2-2.2H68l.8-2.3a1.8 1.8 0 0 1 1.7-1.3h6a1.8 1.8 0 0 1 1.7 1.3l.8 2.3h3.1a2.2 2.2 0 0 1 2.2 2.2v11.6a2.2 2.2 0 0 1-2.2 2.2H64.7a2.2 2.2 0 0 1-2.2-2.2z" stroke-width="2"/><path d="M69.2 19.4a4.4 4.4 0 0 1 7-4.6M77.8 16a4.4 4.4 0 0 1-7 4.6" stroke-width="1.8"/><path d="M76.8 13.2l.3 2.6-2.6.2M70.2 22.2l-.3-2.6 2.6-.2" stroke-width="1.6"/></svg>
<div class="a" style="left:1495px;top:402px;width:425px;height:1px;background:#ebecf1"></div>
<div class="a" style="left:1494px;top:0;width:1px;height:1071px;background:#e1e1e4"></div>
<!-- compound -->
<svg class="a" style="left:1524px;top:436px" width="14" height="18" viewBox="0 0 14 18" fill="none" stroke="#6b717c" stroke-width="2" stroke-linecap="round"><path d="M10 2L3.5 9l6.5 7"/></svg>
<div class="a t" style="left:1549px;top:434px;font-size:21px;color:#0b0d10;font-weight:500">复合矢量图形</div>
<div class="a t" style="left:1806px;top:436px;font-size:18px;color:#0b0d10">执行</div>
<div class="a" style="left:1866px;top:435px;width:36px;height:21px;border-radius:11px;background:#0cc265"></div>
<div class="a" style="left:1883px;top:437px;width:17px;height:17px;border-radius:50%;background:#fff"></div>
<!-- tabs -->
<div class="a" style="left:1513px;top:487px;width:389px;height:48px;border-radius:10px;background:#f0f1f5"></div>
<div class="a" style="left:1644px;top:490px;width:127px;height:42px;border-radius:8px;background:#fff;box-shadow:0 1px 2px rgba(0,0,0,.06)"></div>
<div class="a t" style="left:1513px;width:131px;top:502px;font-size:18px;color:#5c626c;text-align:center">线条雕刻</div>
<div class="a t" style="left:1644px;width:127px;top:502px;font-size:18px;color:#0b0d10;text-align:center">填充雕刻</div>
<div class="a t" style="left:1771px;width:131px;top:502px;font-size:18px;color:#5c626c;text-align:center">彩雕</div>
<!-- recommended -->
<div class="a t" style="left:1523px;top:563px;font-size:18px;color:#0b0d10;font-weight:500">蓝光推荐参数</div>
<svg class="a" style="left:1646px;top:565px" width="16" height="12" viewBox="0 0 16 12" fill="none" stroke="#aeb1b8" stroke-width="1.8"><path d="M2 3l6 6 6-6"/></svg>
<svg class="a" style="left:1860px;top:552px" width="40" height="38" viewBox="0 0 40 38" fill="none" stroke="#d2d4d8" stroke-width="1.9" stroke-linejoin="round" stroke-linecap="butt"><path d="M28 18.4V10.3a2 2 0 0 0-2-2H9.2a2 2 0 0 0-2 2V27a2 2 0 0 0 2 2h8.5"/><path d="M10.8 8.6l3.6 5.4h7.4l3.6-5.4"/><path d="M18.1 25.2h10.5M25 20.8l4.3 4.4-4.3 4.4"/></svg>
<div class="a" style="left:1525px;top:607px;width:365px;height:73px;border-radius:9px;background:#f4f4f8"></div>
<div class="a" style="left:1538px;top:620px;width:340px;font-size:18px;line-height:24px;color:#8a8f99">材料参考效果差异较小，仅推荐了一组推荐参数</div>
<div class="a t" style="left:1525px;top:708px;font-size:18px;color:#8a8f99">激光光源</div>
<div class="a t" style="left:1804px;top:708px;font-size:18px;color:#0b0d10">蓝光</div>
<svg class="a" style="left:1855px;top:711px" width="16" height="12" viewBox="0 0 16 12" fill="none" stroke="#aeb1b8" stroke-width="1.8"><path d="M2 3l6 6 6-6"/></svg>
<div class="a t" style="left:1525px;top:756px;font-size:18px;color:#8a8f99">功率 (%)</div>
<div class="a" style="left:1525px;top:792px;width:251px;height:6px;border-radius:3px;background:#d7d8de"></div>
<div class="a" style="left:1525px;top:792px;width:112px;height:6px;border-radius:3px;background:#0cc265"></div>
<div class="a" style="left:1630px;top:788px;width:14px;height:14px;border-radius:50%;background:#fff;border:3px solid #0cc265"></div>
<div class="a t" style="left:1800px;width:75px;top:786px;font-size:18px;color:#0b0d10;text-align:right">45</div>
<div class="a t" style="left:1525px;top:835px;font-size:18px;color:#8a8f99">速度 (mm/s)</div>
<div class="a" style="left:1525px;top:870px;width:251px;height:6px;border-radius:3px;background:#d7d8de"></div>
<div class="a" style="left:1525px;top:870px;width:64px;height:6px;border-radius:3px;background:#0cc265"></div>
<div class="a" style="left:1582px;top:866px;width:14px;height:14px;border-radius:50%;background:#fff;border:3px solid #0cc265"></div>
<div class="a t" style="left:1800px;width:75px;top:864px;font-size:18px;color:#0b0d10;text-align:right">100</div>
<div class="a" style="left:1495px;top:910px;width:425px;height:10px;overflow:hidden"><div class="a t" style="left:30px;top:7px;font-size:18px;color:#8a8f99">加工次数</div></div>
<div class="a" style="left:1495px;top:920px;width:425px;height:151px;background:#fff;border-top:1px solid #e6e7ec"></div>
<!-- footer -->
<div class="a" style="left:1519px;top:939px;width:377px;height:48px;border-radius:9px;background:#fff;border:1px solid #dcdde3"></div>
<svg class="a" style="left:1671px;top:954px" width="21" height="20" viewBox="0 0 21 20" fill="none" stroke="#232a35" stroke-width="2" stroke-linejoin="round"><path d="M8 17H4a1.5 1.5 0 0 1-1.5-1.5V4A1.5 1.5 0 0 1 4 2.5h11A1.5 1.5 0 0 1 16.5 4v4"/><path d="M9.5 9.5v8l8-4z"/></svg>
<div class="a t" style="left:1703px;top:952px;font-size:20px;color:#0b0d10;font-weight:bold">预览</div>
<div class="a" style="left:1519px;top:1005px;width:96px;height:48px;border-radius:8px;background:#fff;border:1px solid #dcdde3"></div>
<div class="a" style="left:1566px;top:1005px;width:1px;height:48px;background:#dcdde3"></div>
<svg class="a" style="left:1532px;top:1018px" width="22" height="22" viewBox="0 0 22 22" fill="none" stroke="#232a35" stroke-width="2.2"><rect x="3" y="3" width="16" height="16" stroke-dasharray="4 3"/></svg>
<svg class="a" style="left:1583px;top:1022px" width="16" height="12" viewBox="0 0 16 12" fill="none" stroke="#232a35" stroke-width="2.1"><path d="M2 3l6 6 6-6"/></svg>
<div class="a" style="left:1627px;top:1005px;width:269px;height:48px;border-radius:8px;background:#0b0d12"></div>
<div class="a" style="left:1847px;top:1005px;width:1px;height:48px;background:#3a3d45"></div>
<svg class="a" style="left:1704px;top:1018px" width="20" height="22" viewBox="0 0 20 22" fill="none" stroke="#fff" stroke-width="2.1" stroke-linejoin="round"><path d="M3.5 3v16l13-8z"/></svg>
<div class="a t" style="left:1737px;top:1019px;font-size:19px;color:#fff;font-weight:bold">加工</div>
<svg class="a" style="left:1864px;top:1022px" width="16" height="12" viewBox="0 0 16 12" fill="none" stroke="#fff" stroke-width="2.1"><path d="M2 3l6 6 6-6"/></svg>


</body>
</html>
